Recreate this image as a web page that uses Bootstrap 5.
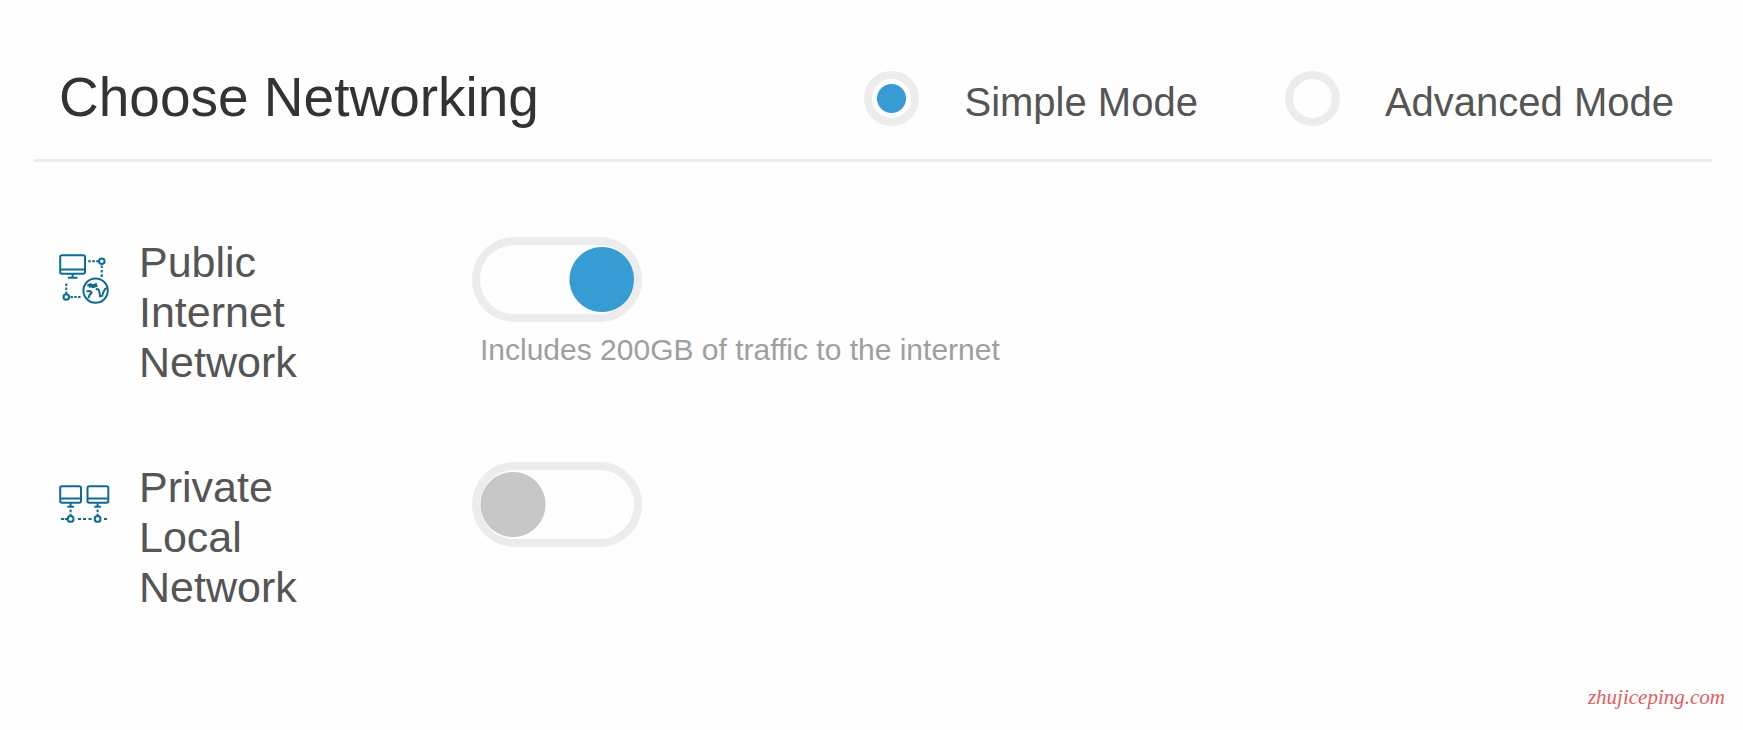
<!DOCTYPE html>
<html lang="en">
<head>
<meta charset="utf-8">
<meta name="viewport" content="width=device-width, initial-scale=1">
<title>Choose Networking</title>
<link rel="stylesheet" href="https://cdn.jsdelivr.net/npm/bootstrap@5.3.0/dist/css/bootstrap.min.css">
<style>
  body { background: #fefefe; color: #555; font-family: "Liberation Sans", Arial, sans-serif; }
  .panel { padding: 67px 31px 0 34px; }
  .panel-head { padding: 0 38px 32px 25px; border-bottom: 3px solid #ececec; }
  .panel-title { font-size: 55px; line-height: 60px; color: #333; font-weight: 400; }
  .modes { column-gap: 87px; }
  .mode { gap: 45px; }
  .mode label { font-size: 40px; line-height: 50px; padding-top: 6px; }
  .form-check-input.mode-radio { width: 55px; height: 55px; margin: 0; border: 8px solid #ececec; background-color: #fefefe; }
  .form-check-input.mode-radio:checked { background-color: #fefefe; border-color: #ececec;
    background-image: radial-gradient(circle, #369cd3 14px, #fefefe 15px); background-size: cover; }
  .options { padding: 75px 25px 0; row-gap: 75px; }
  .option-name { width: 413px; gap: 29px; color: #0f6b94; }
  .option-name label { width: 190px; font-size: 43px; line-height: 50px; color: #555; }
  .option-icon { flex: none; margin-top: 17px; }
  .option-icon-low { margin-top: 23px; }
  .form-check-input.toggle { display: block; float: none; width: 170px; height: 85px; margin: 0;
    border: 8px solid #ececec; border-radius: 43px; background-color: #fefefe; background-size: auto;
    background-image: radial-gradient(circle at 33px 50%, #c7c7c7 32px, transparent 33px); }
  .form-check-input.toggle:checked { background-color: #fefefe; border-color: #ececec;
    background-image: radial-gradient(circle at 122px 50%, #369cd3 32px, transparent 33px); }
  .form-check-input:focus { box-shadow: 0 0 0 4px #369cd340; border-color: #ececec; }
  .hint { margin: 10px 0 0 8px; font-size: 30px; line-height: 36px; color: #9f9f9f; }
  .site-link { padding: 73px 18px 0 0; }
  .site-link a { font: italic 21px/24px "Liberation Serif", serif; color: #e65c5c; }
</style>
</head>
<body>
<main class="panel">
  <header class="panel-head d-flex flex-wrap justify-content-between align-items-end">
    <h1 class="panel-title m-0">Choose Networking</h1>
    <div class="modes d-flex flex-wrap" role="radiogroup" aria-label="Networking mode">
      <div class="mode d-flex">
        <input class="form-check-input mode-radio" type="radio" name="mode" id="simple" checked>
        <label for="simple">Simple Mode</label>
      </div>
      <div class="mode d-flex">
        <input class="form-check-input mode-radio" type="radio" name="mode" id="advanced">
        <label for="advanced">Advanced Mode</label>
      </div>
    </div>
  </header>

  <section class="options d-flex flex-column">
    <div class="d-flex flex-wrap">
      <div class="option-name d-flex align-items-start">
        <svg class="option-icon" width="51" height="51" viewBox="9 9 51 51" fill="none" stroke="currentColor" stroke-width="2" aria-hidden="true">
          <rect x="10.2" y="10.2" width="24.8" height="18.6" rx="1.8"/>
          <path d="M10 24.5h25M22.6 29v3.5M18 32.8h9.5"/>
          <circle cx="51.8" cy="16.3" r="2.8"/>
          <circle cx="16.3" cy="52" r="2.8"/>
          <path d="M38.2 16.3h2.6M42.2 16.3h2.6M46.2 16.3h2.6M51.8 20.5v2.6M51.8 24.9v2.6M51.8 29.3v2.6M16.3 38.5v2.6M16.3 42.5v2.6M16.3 46.5v2.4M20.5 52h2.4M24.3 52h2.4M28.1 52h2.4"/>
          <circle cx="45.6" cy="45.6" r="12.2"/>
          <path d="M37.3 40.6l3.2-1.4 2.4 1.2 3-1.2.6 2-3.6 1.1-2.2-1.1-2 .8M36.5 46.3l3.6-.2 1.5 1.7-2.2 2.4-1 3M45.8 44l2.7.4 1 3 .5 4 2.1-.4 1-3.4 2-3.6 1.8-.8"/>
        </svg>
        <label for="public">Public Internet Network</label>
      </div>
      <div>
        <input class="form-check-input toggle" type="checkbox" role="switch" id="public" aria-describedby="public-hint" checked>
        <p class="hint" id="public-hint">Includes 200GB of traffic to the internet</p>
      </div>
    </div>

    <div class="d-flex flex-wrap">
      <div class="option-name d-flex align-items-start">
        <svg class="option-icon option-icon-low" width="51" height="39" viewBox="9 10 51 39" fill="none" stroke="currentColor" stroke-width="2" aria-hidden="true">
          <rect x="10.2" y="11.2" width="20.8" height="16.6" rx="1.8"/>
          <rect x="37.5" y="11.2" width="20.8" height="16.6" rx="1.8"/>
          <path d="M10 23.5h21M37.5 23.5h21M20.6 28v4M17.3 31.8h6.6M47.6 28v4M44.3 31.8h6.6M20.6 34.6v2.6M47.6 34.6v2.6"/>
          <circle cx="20.6" cy="43.9" r="2.9"/>
          <circle cx="47.6" cy="43.9" r="2.9"/>
          <path d="M11 43.9h3M14.8 43.9h2.5M28 43.9h3M33 43.9h3M38.5 43.9h3M54 43.9h3M20.6 38.8v2M47.6 38.8v2"/>
        </svg>
        <label for="private">Private Local Network</label>
      </div>
      <div>
        <input class="form-check-input toggle" type="checkbox" role="switch" id="private">
      </div>
    </div>
  </section>
</main>
<footer class="site-link text-end"><a class="text-decoration-none" href="#">zhujiceping.com</a></footer>
<script src="https://cdn.jsdelivr.net/npm/bootstrap@5.3.0/dist/js/bootstrap.bundle.min.js"></script>
</body>
</html>
